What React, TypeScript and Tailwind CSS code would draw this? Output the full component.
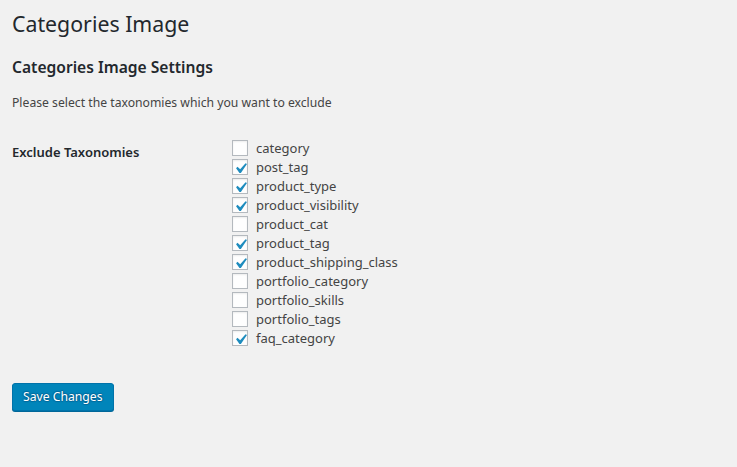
const taxonomies: { name: string; checked: boolean }[] = [
  { name: "category", checked: false },
  { name: "post_tag", checked: true },
  { name: "product_type", checked: true },
  { name: "product_visibility", checked: true },
  { name: "product_cat", checked: false },
  { name: "product_tag", checked: true },
  { name: "product_shipping_class", checked: true },
  { name: "portfolio_category", checked: false },
  { name: "portfolio_skills", checked: false },
  { name: "portfolio_tags", checked: false },
  { name: "faq_category", checked: true },
];

function Checkbox({ checked }: { checked: boolean }) {
  return (
    <span className="relative flex size-4 shrink-0 items-center justify-center border border-[#b4b9be] bg-[#fefefe] shadow-[inset_0_1px_2px_rgba(0,0,0,0.07)]">
      {checked && (
        <svg viewBox="0 0 20 20" className="absolute -left-[3px] -top-[2px] size-[21px]">
          <path d="M14.83 4.89l1.34.94-5.81 8.38H9.02L5.78 9.67l1.34-1.25 2.57 2.4z" fill="#1e8cbe" />
        </svg>
      )}
    </span>
  );
}

export default function App() {
  return (
    <div
      className="min-h-[467px] bg-[#f1f1f1] px-3 text-[12.2px] text-[#444]"
      style={{ fontFamily: '"Noto Sans", "Open Sans", sans-serif' }}
    >
      <h1 className="pt-[9px] text-[21.3px] leading-[29px] font-normal text-[#23282d]">Categories Image</h1>
      <h2 className="mt-[18px] text-[15.6px] leading-[22px] font-semibold text-[#23282d]">Categories Image Settings</h2>
      <p className="mt-[15px] leading-[20px]">Please select the taxonomies which you want to exclude</p>

      <div className="mt-[27px] flex">
        <div className="w-[220px] pt-[2px] text-[13px] leading-[20px] font-semibold text-[#23282d]">Exclude Taxonomies</div>
        <div className="flex flex-col gap-[3px]">
          {taxonomies.map((t) => (
            <label key={t.name} className="flex items-center gap-2 leading-4">
              <Checkbox checked={t.checked} />
              <span className="text-[13px] leading-4">{t.name}</span>
            </label>
          ))}
        </div>
      </div>

      <button className="mt-[37px] h-[28px] rounded-[3px] border border-[#0073aa] bg-[#0085ba] px-[10px] text-[12.2px] leading-[26px] text-white shadow-[0_1px_0_#006799] [text-shadow:0_-1px_1px_#006799,1px_0_1px_#006799,0_1px_1px_#006799,-1px_0_1px_#006799]">
        Save Changes
      </button>
    </div>
  );
}
